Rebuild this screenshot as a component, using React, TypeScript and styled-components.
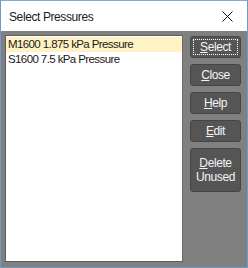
import React, { useState } from 'react';
import styled, { createGlobalStyle } from 'styled-components';

const GlobalStyle = createGlobalStyle`
  html, body {
    margin: 0;
    padding: 0;
    background: #ffffff;
  }
`;

type Item = { id: string; label: string };

const items: Item[] = [
  { id: 'm1600', label: 'M1600 1.875 kPa Pressure' },
  { id: 's1600', label: 'S1600 7.5 kPa Pressure' },
];

const Key: React.FC<{ text: string; at: number }> = ({ text, at }) => (
  <>
    {text.slice(0, at)}
    <u>{text[at]}</u>
    {text.slice(at + 1)}
  </>
);

const App: React.FC = () => {
  const [selected, setSelected] = useState<string>('m1600');
  return (
    <>
      <GlobalStyle />
      <Window>
        <TitleBar>
          <Title>Select Pressures</Title>
          <CloseX aria-label='close'>
            <svg width='11' height='11' viewBox='0 0 11 11'>
              <path d='M0.5 0.5 L10.5 10.5 M10.5 0.5 L0.5 10.5' stroke='#111' strokeWidth='1' />
            </svg>
          </CloseX>
        </TitleBar>
        <Body>
          <List>
            {items.map((it) => (
              <Row
                key={it.id}
                $selected={it.id === selected}
                onClick={() => setSelected(it.id)}
              >
                {it.label}
              </Row>
            ))}
          </List>
          <Buttons>
            <Button $focused>
              <Focus>
                <Key text='Select' at={0} />
              </Focus>
            </Button>
            <Button>
              <Key text='Close' at={0} />
            </Button>
            <Button>
              <Key text='Help' at={0} />
            </Button>
            <Button>
              <Key text='Edit' at={0} />
            </Button>
            <Button $tall>
              <span>
                <Key text='Delete' at={0} />
                <br />
                Unused
              </span>
            </Button>
          </Buttons>
        </Body>
      </Window>
    </>
  );
};

export default App;

const Window = styled.div`
  width: 248px;
  height: 268px;
  box-sizing: border-box;
  border: 1px solid #6e9bcb;
  border-top-color: #7fa7d2;
  display: flex;
  flex-direction: column;
  background: #808080;
  font-family: 'Liberation Sans', Arial, sans-serif;
`;

const TitleBar = styled.div`
  height: 30px;
  background: #ffffff;
  display: flex;
  align-items: center;
  justify-content: space-between;
  padding: 0 0 0 8px;
`;

const Title = styled.span`
  font-size: 12px;
  letter-spacing: -0.4px;
  color: #1a1a1a;
  margin-top: 1px;
`;

const CloseX = styled.div`
  width: 46px;
  height: 30px;
  display: flex;
  align-items: center;
  justify-content: center;
  margin-right: -3px;
`;

const Body = styled.div`
  flex: 1;
  display: flex;
  gap: 7px;
  padding: 4px 6px 5px 4px;
`;

const List = styled.div`
  width: 178px;
  box-sizing: border-box;
  background: #ffffff;
  border: 1px solid #5e5e5e;
  border-right-color: #6a6a6a;
  padding-top: 1px;
`;

const Row = styled.div<{ $selected?: boolean }>`
  height: 15px;
  line-height: 15px;
  padding-left: 2px;
  font-size: 11.5px;
  letter-spacing: -0.6px;
  color: #1a1a1a;
  white-space: nowrap;
  background: ${({ $selected }) => ($selected ? '#fff2c4' : 'transparent')};
  cursor: default;
`;

const Buttons = styled.div`
  width: 51px;
  display: flex;
  flex-direction: column;
  gap: 6px;
  padding-top: 1px;
`;

const Button = styled.button<{ $tall?: boolean; $focused?: boolean }>`
  height: ${({ $tall }) => ($tall ? '44px' : '22px')};
  box-sizing: border-box;
  padding: 2px;
  margin: 0;
  background: #555555;
  border: 1px solid #454545;
  border-radius: 3px;
  color: #f4f4f4;
  font-family: 'Liberation Sans', Arial, sans-serif;
  font-size: 12px;
  letter-spacing: -0.4px;
  line-height: 14px;
  display: flex;
  align-items: center;
  justify-content: center;
  text-align: center;

  & u {
    text-underline-offset: 1px;
  }
`;

const Focus = styled.span`
  flex: 1;
  align-self: stretch;
  display: flex;
  align-items: center;
  justify-content: center;
  border: 1px dotted #ffffff;
`;
